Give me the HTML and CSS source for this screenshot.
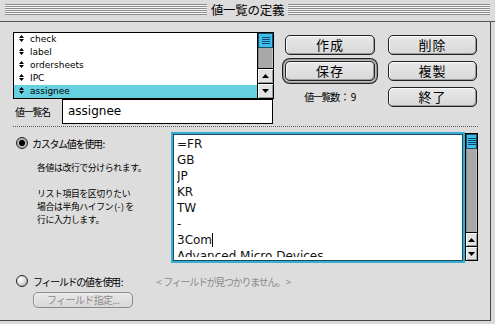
FILE: index.html
```html
<!DOCTYPE html>
<html lang="ja">
<head>
<meta charset="utf-8">
<title>値一覧の定義</title>
<link rel="stylesheet" href="styles.css">
</head>
<body>
<div class="window">
  <div class="titlebar">
    <span class="stripes"></span>
    <span class="title">値一覧の定義</span>
    <span class="stripes"></span>
  </div>
  <div class="content">
    <div class="top">
      <div class="left">
        <div class="listbox">
          <ul class="list">
            <li><svg class="handle" width="5" height="7" viewBox="0 0 5 7"><path d="M0 3 L2.5 0 L5 3 Z M0 4 L2.5 7 L5 4 Z" fill="#000"/></svg>check</li>
            <li><svg class="handle" width="5" height="7" viewBox="0 0 5 7"><path d="M0 3 L2.5 0 L5 3 Z M0 4 L2.5 7 L5 4 Z" fill="#000"/></svg>label</li>
            <li><svg class="handle" width="5" height="7" viewBox="0 0 5 7"><path d="M0 3 L2.5 0 L5 3 Z M0 4 L2.5 7 L5 4 Z" fill="#000"/></svg>ordersheets</li>
            <li><svg class="handle" width="5" height="7" viewBox="0 0 5 7"><path d="M0 3 L2.5 0 L5 3 Z M0 4 L2.5 7 L5 4 Z" fill="#000"/></svg>IPC</li>
            <li class="selected"><svg class="handle" width="5" height="7" viewBox="0 0 5 7"><path d="M0 3 L2.5 0 L5 3 Z M0 4 L2.5 7 L5 4 Z" fill="#000"/></svg>assignee</li>
          </ul>
          <div class="scrollbar list-scroll">
            <div class="thumb"><span></span><span></span><span></span><span></span></div>
            <div class="track"></div>
            <div class="arrow up"><svg width="7" height="4" viewBox="0 0 7 4"><path d="M0 4 L3.5 0 L7 4 Z" fill="#000"/></svg></div>
            <div class="arrow down"><svg width="7" height="4" viewBox="0 0 7 4"><path d="M0 0 L3.5 4 L7 0 Z" fill="#000"/></svg></div>
          </div>
        </div>
        <div class="name-row">
          <span class="jp label">値一覧名</span>
          <div class="input">assignee</div>
        </div>
      </div>
      <div class="buttons">
        <div class="btn">作成</div>
        <div class="btn">削除</div>
        <div class="btn default">保存</div>
        <div class="btn">複製</div>
        <div class="count jp">値一覧数<span class="hw">：9</span></div>
        <div class="btn">終了</div>
      </div>
    </div>
    <div class="sep"></div>
    <div class="middle">
      <div class="custom">
        <div class="radio-row"><span class="radio on"></span><span class="jp">カスタム値を使用<span class="hw">:</span></span></div>
        <p class="jp note">各値は改行で分けられます。</p>
        <div class="jp note second">
          <div>リスト項目を区切りたい</div>
          <div>場合は半角ハイフン<span class="hw">(-)</span>を</div>
          <div>行に入力します。</div>
        </div>
      </div>
      <div class="textarea">
        <div class="lines">
          <div>=FR</div>
          <div>GB</div>
          <div>JP</div>
          <div>KR</div>
          <div>TW</div>
          <div>-</div>
          <div>3Com<span class="caret"></span></div>
          <div>Advanced Micro Devices</div>
        </div>
      </div>
      <div class="scrollbar text-scroll">
        <div class="thumb"><span></span><span></span><span></span><span></span></div>
        <div class="track"></div>
        <div class="arrow up"><svg width="7" height="4" viewBox="0 0 7 4"><path d="M0 4 L3.5 0 L7 4 Z" fill="#000"/></svg></div>
        <div class="arrow down"><svg width="7" height="4" viewBox="0 0 7 4"><path d="M0 0 L3.5 4 L7 0 Z" fill="#000"/></svg></div>
      </div>
    </div>
    <div class="radio-row field-row"><span class="radio"></span><span class="jp">フィールドの値を使用<span class="hw">:</span></span><span class="jp muted"><span class="hw">&lt;</span>フィールドが見つかりません。<span class="hw">&gt;</span></span></div>
    <div class="btn disabled field-btn">フィールド指定...</div>
  </div>
</div>
</body>
</html>
```
FILE: styles.css
```css
* { box-sizing: border-box; margin: 0; padding: 0; }
body {
  width: 495px;
  height: 324px;
  overflow: hidden;
  background: #d8d8d8;
  font-family: "Noto Sans CJK JP", sans-serif;
  color: #000;
}
.window {
  width: 495px;
  height: 324px;
  background: #dadada;
  display: flex;
  flex-direction: column;
}
.titlebar {
  height: 22px;
  flex: none;
  display: flex;
  align-items: center;
  gap: 4px;
  padding: 0 5px 0 5px;
  border-bottom: 1px solid #555;
  background: #dcdcdc;
}
.stripes {
  flex: 1;
  height: 11px;
  margin-top: -2px;
  background: repeating-linear-gradient(to bottom, #8c8c8c 0 1px, #f6f6f6 1px 2px);
}
.title {
  font-size: 12.5px;
  line-height: 14px;
  letter-spacing: -0.3px;
  margin-top: -2px;
}
.content {
  width: 491px;
  height: 299px;
  flex: none;
  border-right: 1px solid #444;
  border-bottom: 1px solid #444;
  background: #dddddd;
  padding: 10px 0 0 13px;
}
.jp {
  font-size: 10px;
  letter-spacing: -1.3px;
  white-space: nowrap;
}
.hw {
  letter-spacing: 0.6px;
  padding: 0 1px;
}
.top { display: flex; }
.left { width: 261px; }
.listbox {
  height: 67px;
  border: 1px solid #000;
  display: flex;
  background: #fff;
}
.list {
  list-style: none;
  flex: 1;
}
.list li {
  height: 13px;
  line-height: 13px;
  font-family: "DejaVu Sans", sans-serif;
  font-size: 9px;
  padding-left: 5px;
  display: flex;
  align-items: center;
}
.list li.selected { background: #66cfe0; }
.handle { margin-right: 6px; margin-top: -2px; }
.scrollbar {
  display: flex;
  flex-direction: column;
  border-left: 1px solid #000;
  background: #a9a9a9;
}
.list-scroll { width: 16px; }
.thumb {
  height: 15px;
  flex: none;
  background: #3fbdee;
  border: 1px solid #1a4f66;
  display: flex;
  flex-direction: column;
  justify-content: center;
  align-items: center;
  gap: 1px;
}
.thumb span {
  display: block;
  width: 8px;
  height: 1px;
  background: #0c4a6a;
}
.track {
  flex: 1;
  background: #a8a8a8;
  box-shadow: inset 1px 0 0 #8a8a8a, inset -1px 0 0 #c4c4c4;
}
.arrow {
  height: 15px;
  flex: none;
  background: #e2e2e2;
  border-top: 1px solid #000;
  display: flex;
  align-items: center;
  justify-content: center;
  box-shadow: inset 1px 1px 0 #fafafa, inset -1px -1px 0 #9a9a9a;
}
.name-row {
  display: flex;
  align-items: center;
}
.name-row .label { width: 49px; padding-left: 2px; }
.input {
  width: 211px;
  height: 25px;
  border: 1px solid #000;
  background: #fff;
  font-family: "DejaVu Sans", sans-serif;
  font-size: 12px;
  line-height: 22px;
  padding-left: 5px;
}
.buttons {
  margin-left: 11px;
  margin-top: 3px;
  display: grid;
  grid-template-columns: 90px 89px;
  grid-template-rows: 20px 20px 20px;
  column-gap: 13px;
  row-gap: 6px;
}
.btn {
  height: 20px;
  border: 1px solid #222;
  border-radius: 5px;
  background: linear-gradient(#e8e8e8, #d8d8d8);
  box-shadow: inset 1px 1px 0 #fafafa, inset -1px -1px 0 #9c9c9c;
  font-size: 13px;
  letter-spacing: 1px;
  text-align: center;
  line-height: 18px;
}
.btn.default {
  box-shadow: inset 1px 1px 0 #fafafa, inset -1px -1px 0 #9c9c9c, 0 0 0 1px #c0c0c0, 0 0 0 2px #9a9a9a, 0 0 0 3px #222;
}
.count {
  text-align: center;
  line-height: 20px;
  padding-left: 2px;
}
.sep {
  width: 465px;
  margin-top: 2px;
  border-top: 1px dotted #555;
}
.middle {
  display: flex;
  margin-top: 5px;
}
.custom {
  width: 158px;
  padding-left: 3px;
}
.radio-row {
  display: flex;
  align-items: center;
  height: 12px;
  margin-top: 5px;
}
.radio {
  width: 12px;
  height: 12px;
  flex: none;
  border-radius: 50%;
  border: 1px solid #222;
  background: radial-gradient(circle at 35% 35%, #ffffff 0, #e4e4e4 40%, #9a9a9a 100%);
  margin-right: 4px;
}
.radio.on {
  background: radial-gradient(circle at 50% 50%, #000 0 2.5px, #444 3px, #bcbcbc 3.5px, #8a8a8a 100%);
}
.note {
  padding-left: 21px;
  font-size: 8.9px;
  letter-spacing: -0.4px;
  line-height: 13px;
  margin-top: 12px;
}
.note.second { margin-top: 13px; }
.note .hw { letter-spacing: 0.3px; }
.textarea {
  width: 294px;
  height: 131px;
  border: 2px solid #3aaed2;
  box-shadow: inset 0 0 0 1px #1b4c5e;
  background: #fff;
  overflow: hidden;
  padding: 2px 0 0 4px;
}
.lines {
  height: 121px;
  overflow: hidden;
  font-family: "DejaVu Sans", sans-serif;
  font-size: 12px;
  line-height: 16px;
  color: #111;
}
.caret {
  display: inline-block;
  width: 1px;
  height: 14px;
  background: #000;
  vertical-align: -3px;
}
.text-scroll {
  width: 13px;
  height: 128px;
  margin-top: 1px;
  border: 1px solid #000;
}
.text-scroll .arrow { height: 14px; }
.field-row {
  margin-top: 12px;
  padding-left: 3px;
}
.field-row .radio { margin-right: 5px; }
.muted {
  color: #8a8a8a;
  margin-left: 30px;
}
.field-btn {
  width: 100px;
  height: 16px;
  margin-top: 5px;
  margin-left: 20px;
  border-color: #8a8a8a;
  color: #8a8a8a;
  font-size: 10px;
  letter-spacing: -0.6px;
  line-height: 14px;
  box-shadow: inset 1px 1px 0 #f0f0f0;
}
```
